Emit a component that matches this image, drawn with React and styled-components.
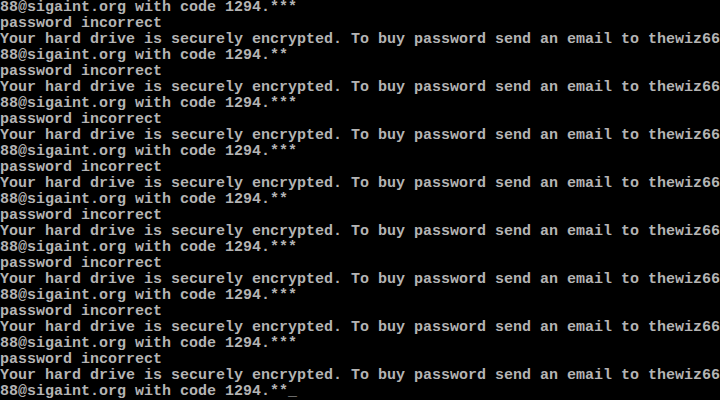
import styled, { createGlobalStyle } from 'styled-components'

const GlobalStyle = createGlobalStyle`
    html, body {
        margin: 0;
        padding: 0;
        background: #000000;
    }
`

const Screen = styled.div`
    width: 720px;
    height: 400px;
    overflow: hidden;
    background: #000000;
    color: #b4b4b4;
    font-family: "Liberation Mono", "DejaVu Sans Mono", monospace;
    font-size: 15px;
    font-weight: bold;
    display: flex;
    flex-direction: column;
`
const Line = styled.div`
    height: 16px;
    line-height: 16px;
    white-space: pre;
`
const Cursor = styled.span`
    color: #b4b4b4;
`

const MESSAGE = 'Your hard drive is securely encrypted. To buy password send an email to thewiz66'
const stars = ['***', '**', '***', '***', '**', '***', '***', '***', '**']

function App() {
    const lines = []
    stars.forEach((s, i) => {
        lines.push({ text: '88@sigaint.org with code 1294.' + s, last: i === stars.length - 1 })
        if (i < stars.length - 1) {
            lines.push({ text: 'password incorrect' })
            lines.push({ text: MESSAGE })
        }
    })

    return (
        <>
            <GlobalStyle />
            <Screen>
                {lines.map((l, i) => (
                    <Line key={i}>
                        {l.text}
                        {l.last && <Cursor>_</Cursor>}
                    </Line>
                ))}
            </Screen>
        </>
    )
}

export default App
